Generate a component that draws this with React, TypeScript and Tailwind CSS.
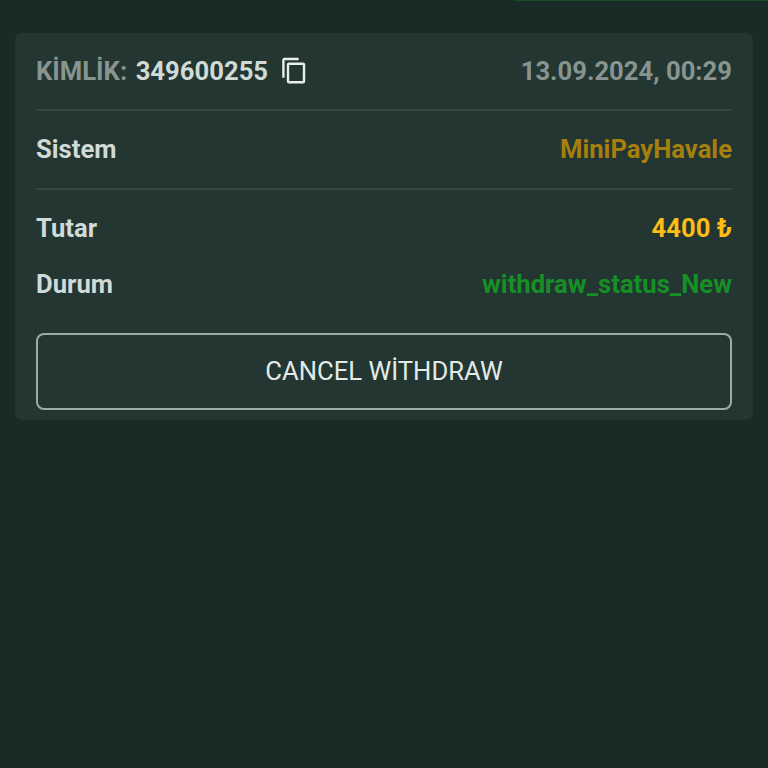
import React from "react";

const Row = ({ label, children }: { label: string; children: React.ReactNode }) => (
  <div className="flex items-center justify-between">
    <span className="text-[#d0dad6]">{label}</span>
    {children}
  </div>
);

export default function App() {
  return (
    <div className="h-[768px] w-[768px] bg-[#182b27] font-['Roboto',sans-serif] text-[25.65px] leading-[30px] font-bold">
      <div className="ml-[514px] h-px bg-[#12521f]" />
      <div className="mx-[15px] mt-[32px] h-[387px] rounded-[7px] bg-[#233632] px-[21px]">
        <div className="flex h-[78px] items-center justify-between border-b-2 border-[#344843] text-[#879490]">
          <div className="flex items-center">
            <span>KİMLİK:</span>
            <span className="ml-[8.5px] text-[#d0dad6]">349600255</span>
            <svg className="ml-[12px]" width="26" height="28" viewBox="0 0 26 28" fill="none" stroke="#e8efed" strokeWidth="2.4">
              <path d="M3.4 20.8V3.2Q3.4 2 4.6 2H18.6" />
              <rect x="8" y="6.8" width="16" height="18.4" rx="1" />
            </svg>
          </div>
          <span>13.09.2024, 00:29</span>
        </div>
        <div className="h-[79px] border-b-2 border-[#344843] pt-[23px]">
          <Row label="Sistem"><span className="text-[#a77f0c]">MiniPayHavale</span></Row>
        </div>
        <div className="pt-[23px]">
          <Row label="Tutar"><span className="text-[#fdbd14]">4400 ₺</span></Row>
        </div>
        <div className="pt-[26px]">
          <Row label="Durum"><span className="text-[#178f27]">withdraw_status_New</span></Row>
        </div>
        <button className="mt-[34px] block h-[77px] w-full rounded-[8px] border-2 border-[#9eaaa6] pb-[2px] font-normal text-[#e2eae7]">CANCEL WİTHDRAW</button>
      </div>
    </div>
  );
}
